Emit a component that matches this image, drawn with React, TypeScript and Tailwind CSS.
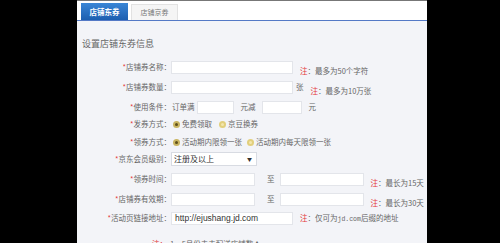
import React from "react";

const font = { fontFamily: '"Noto Sans CJK SC", "Noto Sans", sans-serif' };

function Label({ text }: { text: string }) {
  return (
    <div className="w-[94px] shrink-0 text-right text-[7.5px] leading-[14px] text-[#666] whitespace-nowrap">
      <span className="text-[#e4393c]">*</span>
      {text}：
    </div>
  );
}

function Box({ w, children }: { w: string; children?: React.ReactNode }) {
  return (
    <div className={`${w} h-[13px] bg-white border border-[#e3e5ea] flex items-center px-[3px] shrink-0`}>
      {children}
    </div>
  );
}

function Note({ text }: { text: string }) {
  return (
    <span className="text-[7.5px] text-[#666] whitespace-nowrap">
      <span className="text-[#e4393c]">注</span>：{text}
    </span>
  );
}

function Radio({ on }: { on?: boolean }) {
  return (
    <span
      className={`w-[7px] h-[7px] rounded-full flex items-center justify-center shrink-0 ${
        on ? "bg-[#c9b460]" : "bg-[#e2cf7c]"
      }`}
    >
      <span className={`w-[3px] h-[3px] rounded-full ${on ? "bg-[#5e4f1a]" : "bg-[#f3e6ad]"}`} />
    </span>
  );
}

export default function App() {
  return (
    <div className="w-[500px] h-[243px] bg-black overflow-hidden flex" style={font}>
      <div className="ml-[77px] w-[350px] h-full bg-[#f3f4f8] flex flex-col">
        {/* tabs */}
        <div className="h-[21px] bg-white border-t border-[#777] border-b border-b-[#5479c6] flex items-end pl-[4px] gap-[3px] shrink-0">
          <div className="w-[47px] h-[17px] bg-gradient-to-b from-[#3a86d6] to-[#1d5fb0] text-white text-[7.5px] font-bold flex items-center justify-center">
            店铺东券
          </div>
          <div className="w-[47px] h-[16px] bg-[#f5f5f5] border border-[#e2e2e2] border-b-0 text-[#777] text-[7px] flex items-center justify-center">
            店铺京券
          </div>
        </div>

        <div className="pl-[5px] mt-[17px] text-[9px] leading-[12px] text-[#666]">设置店铺东券信息</div>

        <div className="flex flex-col">
          <div className="flex items-center h-[14px] mt-[10px]">
            <Label text="店铺券名称" />
            <Box w="w-[122px]" />
            <span className="ml-[7px]"><Note text="最多为50个字符" /></span>
          </div>

          <div className="flex items-center h-[14px] mt-[6px]">
            <Label text="店铺券数量" />
            <Box w="w-[122px]" />
            <span className="ml-[3px] text-[7.5px] text-[#666]">张</span>
            <span className="ml-[7px]"><Note text="最多为10万张" /></span>
          </div>

          <div className="flex items-center h-[14px] mt-[6px]">
            <Label text="使用条件" />
            <span className="ml-[1px] text-[7.5px] text-[#666]">订单满</span>
            <span className="ml-[2px]"><Box w="w-[37px]" /></span>
            <span className="ml-[7px] text-[7.5px] text-[#666]">元减</span>
            <span className="ml-[6px]"><Box w="w-[40px]" /></span>
            <span className="ml-[7px] text-[7.5px] text-[#666]">元</span>
          </div>

          <div className="flex items-center h-[14px] mt-[3px]">
            <Label text="发券方式" />
            <span className="ml-[2px] flex items-center gap-[2px] text-[7.5px] text-[#666]">
              <Radio on /> 免费领取
            </span>
            <span className="ml-[7px] flex items-center gap-[2px] text-[7.5px] text-[#666]">
              <Radio /> 京豆换券
            </span>
          </div>

          <div className="flex items-center h-[14px] mt-[4px]">
            <Label text="领券方式" />
            <span className="ml-[2px] flex items-center gap-[2px] text-[7.5px] text-[#666]">
              <Radio on /> 活动期内限领一张
            </span>
            <span className="ml-[5px] flex items-center gap-[2px] text-[7.5px] text-[#666]">
              <Radio /> 活动期内每天限领一张
            </span>
          </div>

          <div className="flex items-center h-[14px] mt-[3px]">
            <Label text="京东会员级别" />
            <div className="w-[86px] h-[14px] bg-white border border-[#d8dbe2] flex items-center justify-between px-[2px] text-[8px] text-[#333]">
              <span>注册及以上</span>
              <span className="text-[5px] text-[#333] mr-[2px]">▼</span>
            </div>
          </div>

          <div className="flex items-center h-[14px] mt-[6px]">
            <Label text="领券时间" />
            <Box w="w-[84px]" />
            <span className="ml-[12px] text-[7.5px] text-[#666]">至</span>
            <span className="ml-[5px]"><Box w="w-[84px]" /></span>
            <span className="ml-[7px]"><Note text="最长为15天" /></span>
          </div>

          <div className="flex items-center h-[14px] mt-[6px]">
            <Label text="店铺券有效期" />
            <Box w="w-[84px]" />
            <span className="ml-[12px] text-[7.5px] text-[#666]">至</span>
            <span className="ml-[5px]"><Box w="w-[84px]" /></span>
            <span className="ml-[7px]"><Note text="最长为30天" /></span>
          </div>

          <div className="flex items-center h-[14px] mt-[5px]">
            <Label text="活动页链接地址" />
            <Box w="w-[122px]">
              <span className="text-[8.5px] text-[#333]" style={{ fontFamily: '"Liberation Sans", Arial, sans-serif' }}>
                http://ejushang.jd.com
              </span>
            </Box>
            <span className="ml-[7px] text-[7.5px] text-[#666] whitespace-nowrap">
              <span className="text-[#e4393c]">注</span>：仅可为
              <span style={{ fontFamily: '"Liberation Mono", monospace' }} className="text-[6.5px]">jd.com</span>
              后缀的地址
            </span>
          </div>

          <div className="flex items-center h-[14px] mt-[12px] pl-[75px] text-[7.5px] text-[#666] whitespace-nowrap">
            <span className="text-[#e4393c]">注：</span>
            <span className="ml-[3px]">1、5月份未去配送店铺数▲</span>
          </div>
        </div>
      </div>
    </div>
  );
}
